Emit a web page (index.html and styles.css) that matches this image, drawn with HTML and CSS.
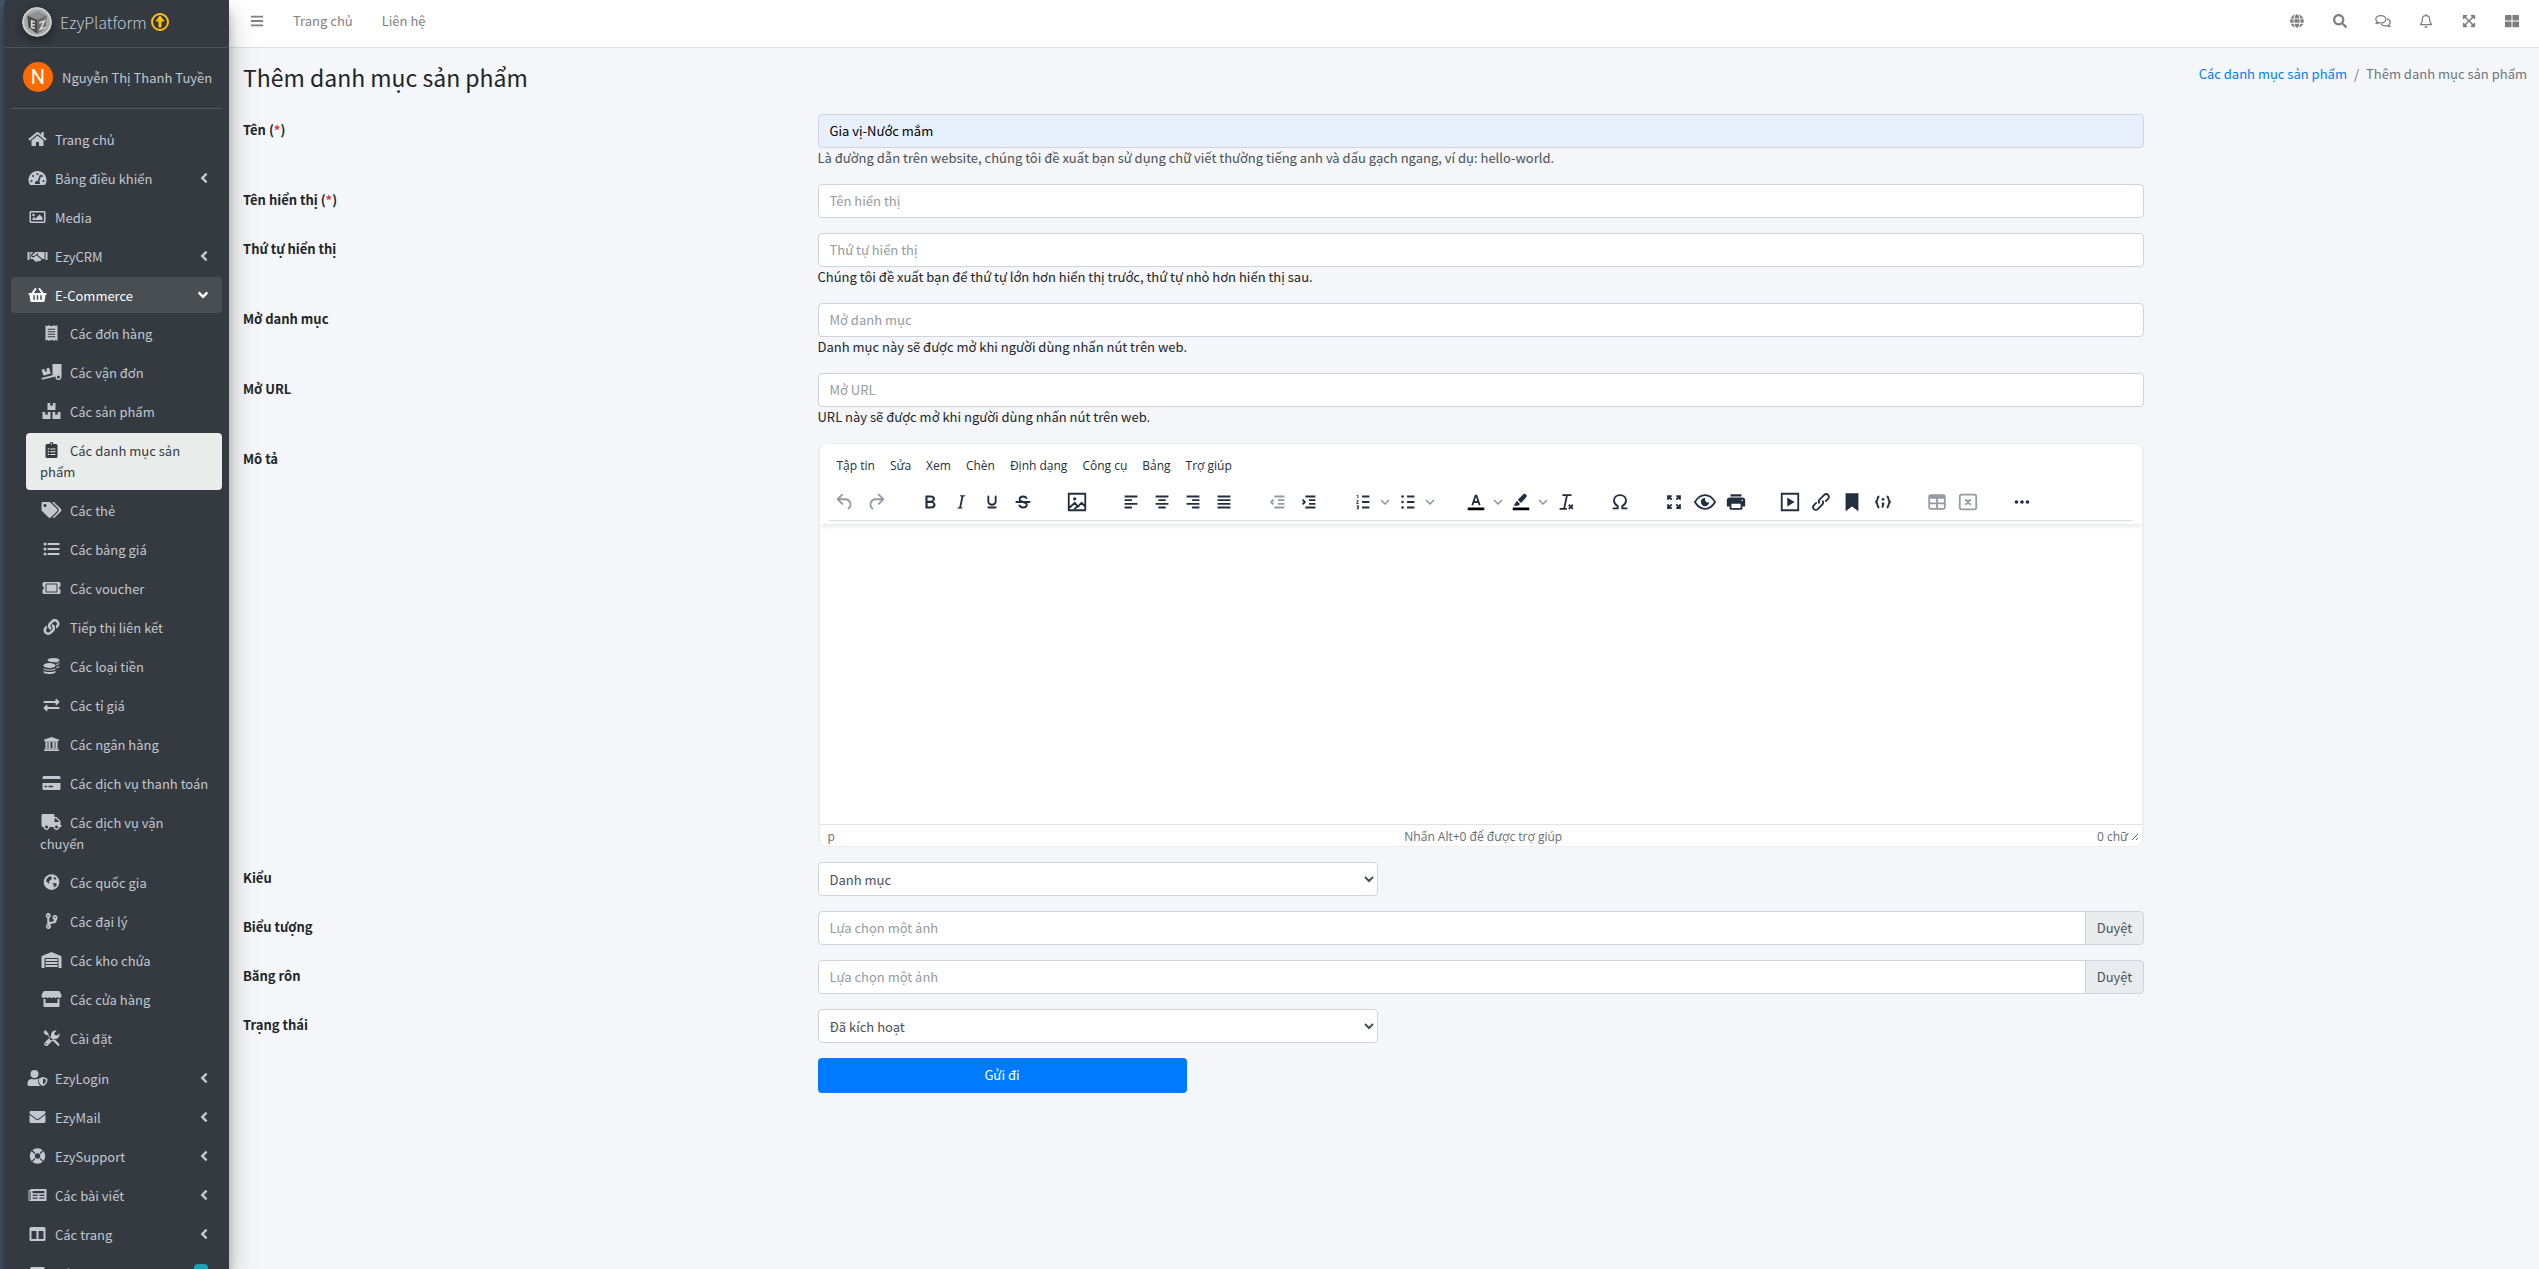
FILE: index.html
```html
<!DOCTYPE html>
<html lang="vi">
<head>
<meta charset="utf-8">
<meta name="viewport" content="width=device-width, initial-scale=1">
<title>Thêm danh mục sản phẩm</title>
<link rel="stylesheet" href="styles.css">
</head>
<body>
<svg class="sprite" aria-hidden="true">
  <symbol id="home" viewBox="0 0 576 512"><path d="M280.37 148.26L96 300.11V464a16 16 0 0 0 16 16l112.06-.29a16 16 0 0 0 15.92-16V368a16 16 0 0 1 16-16h64a16 16 0 0 1 16 16v95.64a16 16 0 0 0 16 16.05L464 480a16 16 0 0 0 16-16V300L295.67 148.26a12.19 12.19 0 0 0-15.3 0zM571.6 251.47L488 182.56V44.05a12 12 0 0 0-12-12h-56a12 12 0 0 0-12 12v72.61L318.47 43a48 48 0 0 0-61 0L4.34 251.47a12 12 0 0 0-1.6 16.9l25.5 31A12 12 0 0 0 45.15 301l235.22-193.74a12.19 12.19 0 0 1 15.3 0L530.9 301a12 12 0 0 0 16.9-1.6l25.5-31a12 12 0 0 0-1.7-16.93z"/></symbol>
  <symbol id="gauge" viewBox="0 0 576 512"><path fill-rule="evenodd" d="M288 32C129 32 0 161 0 320c0 53 14 102 39 145 6 9 16 15 27 15h444c11 0 21-6 27-15 25-43 39-92 39-145C576 161 447 32 288 32zM288 96a32 32 0 1 1 0 64 32 32 0 0 1 0-64zM96 384a32 32 0 1 1 0-64 32 32 0 0 1 0 64zM144 224a32 32 0 1 1 0-64 32 32 0 0 1 0 64zM390 153c13 4 20 18 15 30l-61 184c24 18 32 52 18 81H214c-25-48 8-96 58-96l24-4 61-180c4-13 20-20 33-15zM432 224a32 32 0 0 1-14-60c20-8 46 6 46 28 0 18-14 32-32 32zM480 384a32 32 0 1 1 0-64 32 32 0 0 1 0 64z"/></symbol>
  <symbol id="image" viewBox="0 0 512 512"><path d="M464 64H48C21.490 64 0 85.490 0 112v288c0 26.510 21.490 48 48 48h416c26.510 0 48-21.490 48-48V112c0-26.510-21.490-48-48-48zm-6 336H54a6 6 0 0 1-6-6V118a6 6 0 0 1 6-6h404a6 6 0 0 1 6 6v276a6 6 0 0 1-6 6zM128 152c-22.091 0-40 17.909-40 40s17.909 40 40 40 40-17.909 40-40-17.909-40-40-40zM96 352h320v-80l-87.515-87.515c-4.686-4.686-12.284-4.686-16.971 0L192 304l-39.515-39.515c-4.686-4.686-12.284-4.686-16.971 0L96 304v48z"/></symbol>
  <symbol id="handshake" viewBox="0 0 640 512"><path d="M0 128h64v256H0zM576 128h64v256h-64zM96 128h88l-54 60c-28 32-18 78 12 98 28 18 62 14 88-10l50-44 148 120c14 12 16 32 4 46-10 12-28 14-40 6-12 22-38 28-58 14-18 26-52 32-78 10l-92-80H96zM544 128v224h-68c-4-10-10-20-20-28L318 212l26-24c14-14 0-36-18-24l-116 88c-16 12-38 10-48-4-10-12-8-30 4-42l74-66c10-8 22-12 36-12h160c10 0 22 4 30 10z"/></symbol>
  <symbol id="basket" viewBox="0 0 576 512"><path d="M576 216v16c0 13.255-10.745 24-24 24h-8l-26.113 182.788C514.509 462.435 494.257 480 470.37 480H105.63c-23.887 0-44.139-17.565-47.518-41.212L32 256h-8c-13.255 0-24-10.745-24-24v-16c0-13.255 10.745-24 24-24h67.341l106.78-146.821c10.395-14.292 30.407-17.453 44.701-7.058 14.293 10.395 17.453 30.408 7.058 44.701L170.477 192h235.046L326.12 82.821c-10.395-14.292-7.234-34.306 7.059-44.701 14.291-10.395 34.306-7.235 44.701 7.058L484.659 192H552c13.255 0 24 10.745 24 24zM312 392V280c0-13.255-10.745-24-24-24s-24 10.745-24 24v112c0 13.255 10.745 24 24 24s24-10.745 24-24zm112 0V280c0-13.255-10.745-24-24-24s-24 10.745-24 24v112c0 13.255 10.745 24 24 24s24-10.745 24-24zm-224 0V280c0-13.255-10.745-24-24-24s-24 10.745-24 24v112c0 13.255 10.745 24 24 24s24-10.745 24-24z"/></symbol>
  <symbol id="receipt" viewBox="0 0 384 512"><path fill-rule="evenodd" d="M0 0l56 40 52-40 56 40 28-20 28 20 56-40 52 40 56-40v512l-56-40-52 40-56-40-28 20-28-20-56 40-52-40-56 40zM72 120v32h240v-32zM72 200v32h240v-32zM72 280v32h240v-32zM72 360v32h240v-32z"/></symbol>
  <symbol id="loading" viewBox="0 0 640 512"><path fill-rule="evenodd" d="M352 0h288v416a96 96 0 1 1-190-18L14 502 2 448l350-88zM544 368a48 48 0 1 0 0 96 48 48 0 0 0 0-96zM6 180l88-24 24 90 60-16-24-90 90-24 52 190-220 58c-8 2-16-2-18-10L0 192z"/></symbol>
  <symbol id="boxes" viewBox="0 0 576 512"><path d="M160 0h86v96l42-26 42 26V0h86v224H160zM0 288h86v96l42-26 42 26v-96h86v224H0zM320 288h86v96l42-26 42 26v-96h86v224H320z"/></symbol>
  <symbol id="clipboard" viewBox="0 0 384 512"><path fill-rule="evenodd" d="M336 64h-80a64 64 0 0 0-128 0H48a48 48 0 0 0-48 48v352a48 48 0 0 0 48 48h288a48 48 0 0 0 48-48V112a48 48 0 0 0-48-48zM192 40a24 24 0 1 1 0 48 24 24 0 0 1 0-48zM72 200h48v40H72zM152 204h168v32H152zM72 288h48v40H72zM152 292h168v32H152zM72 376h48v40H72zM152 380h168v32H152z"/></symbol>
  <symbol id="tags" viewBox="0 0 640 512"><path d="M497.941 225.941L286.059 14.059A48 48 0 0 0 252.118 0H48C21.490 0 0 21.490 0 48v204.118a48 48 0 0 0 14.059 33.941l211.882 211.882c18.744 18.745 49.136 18.746 67.882 0l204.118-204.118c18.745-18.745 18.745-49.137 0-67.882zM112 160c-26.510 0-48-21.490-48-48s21.490-48 48-48 48 21.490 48 48-21.490 48-48 48zm513.941 133.823L421.823 497.941c-18.745 18.745-49.137 18.745-67.882 0l-.36-.36L527.640 323.522c16.999-16.999 26.362-39.600 26.362-63.640s-9.362-46.641-26.362-63.640L331.397 0h48.721a48 48 0 0 1 33.941 14.059l211.882 211.882c18.745 18.745 18.745 49.137 0 67.882z"/></symbol>
  <symbol id="list" viewBox="0 0 512 512"><circle cx="48" cy="96" r="48"/><circle cx="48" cy="256" r="48"/><circle cx="48" cy="416" r="48"/><path d="M144 64h352a16 16 0 0 1 16 16v32a16 16 0 0 1-16 16H144a16 16 0 0 1-16-16V80a16 16 0 0 1 16-16zM144 224h352a16 16 0 0 1 16 16v32a16 16 0 0 1-16 16H144a16 16 0 0 1-16-16v-32a16 16 0 0 1 16-16zM144 384h352a16 16 0 0 1 16 16v32a16 16 0 0 1-16 16H144a16 16 0 0 1-16-16v-32a16 16 0 0 1 16-16z"/></symbol>
  <symbol id="ticket" viewBox="0 0 576 512"><path fill-rule="evenodd" d="M48 64h480a48 48 0 0 1 48 48v96a48 48 0 0 0 0 96v96a48 48 0 0 1-48 48H48a48 48 0 0 1-48-48v-96a48 48 0 0 0 0-96v-96a48 48 0 0 1 48-48zM96 136v240a24 24 0 0 0 24 24h336a24 24 0 0 0 24-24V136a24 24 0 0 0-24-24H120a24 24 0 0 0-24 24zM128 144h320v224H128z"/></symbol>
  <symbol id="link" viewBox="0 0 512 512"><path d="M326.612 185.391c59.747 59.809 58.927 155.698.36 214.590-.11.12-.24.25-.36.37l-67.200 67.200c-59.270 59.270-155.699 59.262-214.960 0-59.270-59.260-59.270-155.700 0-214.960l37.106-37.106c9.840-9.840 26.786-3.300 27.294 10.606.648 17.722 3.826 35.527 9.690 52.721 1.986 5.822.567 12.262-3.783 16.612l-13.087 13.087c-28.026 28.026-28.905 73.660-1.155 101.960 28.024 28.579 74.086 28.749 102.325.51l67.200-67.190c28.191-28.191 28.073-73.757 0-101.830-3.701-3.694-7.429-6.564-10.341-8.569a16.037 16.037 0 0 1-6.947-12.606c-.396-10.567 3.348-21.456 11.698-29.806l21.054-21.055c5.521-5.521 14.182-6.199 20.584-1.731a152.482 152.482 0 0 1 20.522 17.197zM467.547 44.449c-59.261-59.262-155.690-59.270-214.960 0l-67.200 67.200c-.12.12-.25.25-.36.37-58.566 58.892-59.387 154.781.36 214.590a152.454 152.454 0 0 0 20.521 17.196c6.402 4.468 15.064 3.789 20.584-1.731l21.054-21.055c8.350-8.350 12.094-19.239 11.698-29.806a16.037 16.037 0 0 0-6.947-12.606c-2.912-2.005-6.640-4.875-10.341-8.569-28.073-28.073-28.191-73.639 0-101.830l67.200-67.190c28.239-28.239 74.300-28.069 102.325.51 27.750 28.300 26.872 73.934-1.155 101.960l-13.087 13.087c-4.350 4.350-5.769 10.790-3.783 16.612 5.864 17.194 9.042 34.999 9.690 52.721.509 13.906 17.454 20.446 27.294 10.606l37.106-37.106c59.271-59.259 59.271-155.699.001-214.959z"/></symbol>
  <symbol id="coins" viewBox="0 0 512 512"><ellipse cx="320" cy="64" rx="192" ry="64"/><ellipse cx="192" cy="240" rx="192" ry="80"/><path d="M0 320c40 32 110 48 192 48s152-16 192-48v20c0 36-86 62-192 62S0 376 0 340zM0 404c40 32 110 44 192 44s152-12 192-44v44c0 36-86 64-192 64S0 484 0 448zM512 104c-22 24-66 40-110 46-16-10-34-16-54-20 68-2 130-16 164-44zM416 236v-48c40-8 76-20 96-38v10c0 30-42 60-96 76zM416 330v-48c40-8 76-20 96-38v16c0 28-40 56-96 70z"/></symbol>
  <symbol id="exchange" viewBox="0 0 512 512"><path d="M0 168v-16a24 24 0 0 1 24-24h360V80c0-21 26-32 41-17l80 80a24 24 0 0 1 0 34l-80 80c-15 15-41 4-41-17v-48H24a24 24 0 0 1-24-24zM488 320H128v-47c0-22-26-32-41-17l-80 80a24 24 0 0 0 0 34l80 80c15 15 41 4 41-17v-49h360a24 24 0 0 0 24-24v-16a24 24 0 0 0-24-24z"/></symbol>
  <symbol id="bank" viewBox="0 0 512 512"><path d="M256 32L16 122v38h32v24h416v-24h32v-38zM64 192h64v192H64zM160 192h64v192h-64zM288 192h64v192h-64zM384 192h64v192h-64zM32 424c0-22 14-32 32-32h384c18 0 32 10 32 32zM16 480v-30c0-12 10-18 24-18h432c14 0 24 6 24 18v30z"/></symbol>
  <symbol id="card" viewBox="0 0 576 512"><path fill-rule="evenodd" d="M0 432a48 48 0 0 0 48 48h480a48 48 0 0 0 48-48V256H0zM192 340h136a12 12 0 0 1 12 12v28a12 12 0 0 1-12 12H192zM76 340h72v52H76a12 12 0 0 1-12-12v-28a12 12 0 0 1 12-12zM576 80v48H0V80a48 48 0 0 1 48-48h480a48 48 0 0 1 48 48z"/></symbol>
  <symbol id="truck" viewBox="0 0 640 512"><path d="M624 352h-16V243.900c0-12.700-5.100-24.900-14.100-33.900L494 110.100c-9-9-21.200-14.100-33.900-14.100H416V48c0-26.500-21.500-48-48-48H48C21.500 0 0 21.500 0 48v320c0 26.500 21.500 48 48 48h16c0 53 43 96 96 96s96-43 96-96h128c0 53 43 96 96 96s96-43 96-96h48c8.800 0 16-7.200 16-16v-32c0-8.800-7.200-16-16-16zM160 464c-26.500 0-48-21.500-48-48s21.500-48 48-48 48 21.500 48 48-21.500 48-48 48zm320 0c-26.500 0-48-21.500-48-48s21.500-48 48-48 48 21.500 48 48-21.500 48-48 48zm80-208H416V144h44.100l99.900 99.900V256z"/></symbol>
  <symbol id="earth" viewBox="0 0 512 512"><path fill-rule="evenodd" d="M256 4a252 252 0 1 0 0 504 252 252 0 0 0 0-504zM80 236c10-74 60-140 136-164l44 10-14 34 26 22-22 40-44 10-8 40-36 2 22 34 0 38-34-8-24-38zM302 296l60-12 62 28-6 50-74 66-20-54 12-36-46-12zM336 84c40 18 66 46 82 82l-46 14-44-34z"/></symbol>
  <symbol id="branch" viewBox="0 0 384 512"><path fill-rule="evenodd" d="M384 144a80 80 0 1 0-113 73c-1 18-4 31-10 39-14 17-52 21-88 24-17 2-35 4-52 7V154a80 80 0 1 0-64 0v204a80 80 0 1 0 84 8c10-16 40-20 68-22 46-4 98-9 126-46 14-18 20-42 21-76a80 80 0 0 0 28-78zM80 56a24 24 0 1 1 0 48 24 24 0 0 1 0-48zM80 456a24 24 0 1 1 0-48 24 24 0 0 1 0 48zM304 120a24 24 0 1 1 0 48 24 24 0 0 1 0-48z"/></symbol>
  <symbol id="warehouse" viewBox="0 0 640 512"><path d="M610 117L338 4a48 48 0 0 0-37 0L30 117A48 48 0 0 0 0 161v343a8 8 0 0 0 8 8h80a8 8 0 0 0 8-8V224c0-18 14-32 33-32h382c19 0 33 14 33 32v280a8 8 0 0 0 8 8h80a8 8 0 0 0 8-8V161a48 48 0 0 0-30-44zM128 224h384v60H128zM128 320h384v62H128zM128 418h384v62H128z"/></symbol>
  <symbol id="store" viewBox="0 0 640 512"><path d="M92 0h456c18 0 32 8 40 22l46 96c24 52-10 106-64 106-26 0-48-12-62-30-16 18-38 30-64 30s-50-12-62-30c-14 18-36 30-62 30s-48-12-62-30c-14 18-36 30-62 30s-48-12-62-30c-14 18-36 30-62 30C16 224-18 170 6 118L52 22C60 8 74 0 92 0zM64 252h64v132h384V252h64v228a32 32 0 0 1-32 32H96a32 32 0 0 1-32-32z"/></symbol>
  <symbol id="tools" viewBox="0 0 512 512"><path fill-rule="evenodd" d="M64 0L0 64l64 98h54l90 90-26 28 56 56 28-26 104 104 18 18 80 80c10 10 36-8 40-34 4-16-2-30-10-40L372 312l-90-16-120-120v-54zM508 108c12 50 0 104-40 142-34 36-84 48-130 38L136 492a68 68 0 0 1-116-48c0-18 8-36 20-48l204-204c-12-46 2-96 38-134 38-38 92-52 142-40l-76 76 12 66 66 12zM80 412a24 24 0 1 0 0 48 24 24 0 0 0 0-48z"/></symbol>
  <symbol id="user-shield" viewBox="0 0 640 512"><path d="M224 256a128 128 0 1 0 0-256 128 128 0 0 0 0 256zM334 284c-8 104 26 176 88 228H48a48 48 0 0 1-48-48v-42c0-74 60-134 134-134h17c46 20 100 20 146 0h17z"/><path fill-rule="evenodd" d="M622 271l-116-45a32 32 0 0 0-22 0l-116 45c-10 4-16 14-16 24 0 118 72 190 132 215 8 3 16 3 22 0 48-19 134-84 134-215 0-10-8-20-18-24zM496 462V273l96 37c-6 84-54 132-96 152z"/></symbol>
  <symbol id="envelope" viewBox="0 0 512 512"><path d="M502.300 190.800c3.900-3.100 9.700-.2 9.700 4.700V400c0 26.500-21.500 48-48 48H48c-26.500 0-48-21.500-48-48V195.600c0-5 5.700-7.800 9.700-4.700 22.400 17.400 52.100 39.500 154.100 113.600 21.100 15.400 56.700 47.800 92.200 47.600 35.700.3 72-32.800 92.300-47.600 102-74.100 131.600-96.300 154-113.700zM256 320c23.200.4 56.600-29.200 73.400-41.400 132.700-96.300 142.800-104.700 173.400-128.700 5.800-4.500 9.200-11.500 9.200-18.900v-19c0-26.500-21.500-48-48-48H48c-26.500 0-48 21.500-48 48v19c0 7.400 3.400 14.300 9.200 18.900 30.600 23.900 40.700 32.400 173.400 128.700 16.800 12.200 50.200 41.800 73.400 41.400z"/></symbol>
  <symbol id="ring" viewBox="0 0 512 512"><circle cx="256" cy="256" r="168" fill="none" stroke="currentColor" stroke-width="160"/><path class="cut" d="M100 70L70 100l88 88 30-30zM412 70l30 30-88 88-30-30zM70 412l30 30 88-88-30-30zM442 412l-30 30-88-88 30-30z"/></symbol>
  <symbol id="news" viewBox="0 0 576 512"><path fill-rule="evenodd" d="M552 64H88a24 24 0 0 0-24 24v8H24a24 24 0 0 0-24 24v280a48 48 0 0 0 48 48h504a24 24 0 0 0 24-24V88a24 24 0 0 0-24-24zM32 128h32v272a16 16 0 0 1-32 0zM130 128h380v72H130zM130 248h160v42H130zM350 248h160v42H350zM130 336h160v42H130zM350 336h160v42H350z"/></symbol>
  <symbol id="columns" viewBox="0 0 512 512"><path fill-rule="evenodd" d="M464 32H48A48 48 0 0 0 0 80v352a48 48 0 0 0 48 48h416a48 48 0 0 0 48-48V80a48 48 0 0 0-48-48zM224 416H64V160h160zM448 416H288V160h160z"/></symbol>
  <symbol id="bars" viewBox="0 0 448 512"><path d="M16 132h416a16 16 0 0 0 16-16V76a16 16 0 0 0-16-16H16A16 16 0 0 0 0 76v40a16 16 0 0 0 16 16zM16 292h416a16 16 0 0 0 16-16v-40a16 16 0 0 0-16-16H16a16 16 0 0 0-16 16v40a16 16 0 0 0 16 16zM16 452h416a16 16 0 0 0 16-16v-40a16 16 0 0 0-16-16H16a16 16 0 0 0-16 16v40a16 16 0 0 0 16 16z"/></symbol>
  <symbol id="angle" viewBox="0 0 256 512"><path d="M31.700 239l136-136c9.400-9.400 24.600-9.400 33.900 0l22.600 22.600c9.400 9.400 9.400 24.600 0 33.900L127.900 256l96.400 96.400c9.400 9.400 9.400 24.600 0 33.900L201.700 409c-9.400 9.400-24.600 9.400-33.900 0l-136-136c-9.500-9.400-9.500-24.600-.1-34z"/></symbol>
  <symbol id="globe" viewBox="0 0 496 512"><path d="M336.500 160C322 70.700 287.800 8 248 8s-74 62.700-88.500 152h177zM152 256c0 22.200 1.200 43.500 3.300 64h185.300c2.100-20.500 3.300-41.800 3.300-64s-1.200-43.500-3.300-64H155.300c-2.100 20.500-3.300 41.800-3.300 64zm324.700-96c-28.600-67.900-86.500-120.400-158-141.600 24.400 33.800 41.200 84.700 50 141.600h108zM177.200 18.400C105.800 39.600 47.800 92.100 19.300 160h108c8.700-56.900 25.500-107.800 49.900-141.600zM487.400 192H372.700c2.100 21 3.300 42.500 3.300 64s-1.200 43-3.300 64h114.600c5.500-20.500 8.600-41.800 8.600-64s-3.100-43.500-8.500-64zM120 256c0-21.500 1.200-43 3.300-64H8.600C3.200 212.500 0 233.800 0 256s3.200 43.500 8.600 64h114.600c-2-21-3.200-42.500-3.200-64zm39.500 96c14.500 89.300 48.700 152 88.500 152s74-62.700 88.500-152h-177zm159.300 141.600c71.400-21.200 129.400-73.700 158-141.600h-108c-8.800 56.900-25.600 107.800-50 141.600zM19.300 352c28.600 67.900 86.500 120.400 158 141.600-24.400-33.800-41.200-84.700-50-141.600h-108z"/></symbol>
  <symbol id="search" viewBox="0 0 512 512"><path d="M505 442.700L405.300 343c-4.500-4.500-10.600-7-17-7H372c27.600-35.300 44-79.700 44-128C416 93.100 322.900 0 208 0S0 93.100 0 208s93.100 208 208 208c48.300 0 92.700-16.400 128-44v16.300c0 6.400 2.500 12.500 7 17l99.700 99.700c9.400 9.400 24.600 9.400 33.900 0l28.300-28.300c9.400-9.400 9.400-24.600.1-34zM208 336c-70.700 0-128-57.200-128-128 0-70.700 57.200-128 128-128 70.700 0 128 57.200 128 128 0 70.700-57.200 128-128 128z"/></symbol>
  <symbol id="comments" viewBox="0 0 576 512"><path fill="none" stroke="currentColor" stroke-width="46" stroke-linejoin="round" d="M208 56c102 0 184 60 184 136s-82 136-184 136c-28 0-54-4-78-13-28 20-62 32-100 35 22-20 36-44 42-72-30-24-48-54-48-86 0-76 82-136 184-136zM432 176c70 20 120 68 120 124 0 32-18 62-48 86 6 28 20 52 42 72-38-3-72-15-100-35-24 9-50 13-78 13-64 0-122-26-154-66"/></symbol>
  <symbol id="bell" viewBox="0 0 448 512"><path fill="none" stroke="currentColor" stroke-width="46" stroke-linejoin="round" d="M224 58c-76 0-134 58-134 140 0 118-36 140-62 174v20h392v-20c-26-34-62-56-62-174 0-82-58-140-134-140z"/><path d="M200 0h48v60h-48zM160 448h128a64 64 0 0 1-128 0z"/></symbol>
  <symbol id="expand" viewBox="0 0 448 512"><path d="M0 56a24 24 0 0 1 24-24h112c22 0 32 26 17 41l-36 36 107 107 107-107-36-36c-15-15-5-41 17-41h112a24 24 0 0 1 24 24v112c0 22-26 32-41 17l-36-36-107 107 107 107 36-36c15-15 41-5 41 17v112a24 24 0 0 1-24 24H312c-22 0-32-26-17-41l36-36-107-107-107 107 36 36c15 15 5 41-17 41H24a24 24 0 0 1-24-24V344c0-22 26-32 41-17l36 36 107-107L77 149l-36 36c-15 15-41 5-41-17z"/></symbol>
  <symbol id="grid" viewBox="0 0 512 512"><rect y="32" width="240" height="208" rx="24"/><rect x="272" y="32" width="240" height="208" rx="24"/><rect y="272" width="240" height="208" rx="24"/><rect x="272" y="272" width="240" height="208" rx="24"/></symbol>
  <symbol id="upgrade" viewBox="0 0 20 20"><circle cx="10" cy="10" r="8" fill="none" stroke="currentColor" stroke-width="2"/><path d="M10 4l4 5h-3v6H9V9H6z" stroke="currentColor"/></symbol>

  <symbol id="t-undo" viewBox="0 0 24 24"><path d="M6.400 8H12c3.700 0 6.200 2 6.800 5.100.6 2.700-.4 5.600-2.300 6.800a1 1 0 0 1-1-1.800c1.100-.6 1.800-2.700 1.400-4.600-.5-2.100-2.100-3.500-4.900-3.500H6.400l3.300 3.300a1 1 0 1 1-1.400 1.400l-5-5a1 1 0 0 1 0-1.400l5-5a1 1 0 0 1 1.400 1.400L6.400 8Z"/></symbol>
  <symbol id="t-redo" viewBox="0 0 24 24"><path d="M17.600 10H12c-2.800 0-4.400 1.400-4.900 3.500-.4 2 .3 4 1.400 4.600a1 1 0 1 1-1 1.800c-2-1.200-2.900-4.100-2.300-6.800.6-3 3-5.100 6.800-5.100h5.600l-3.300-3.300a1 1 0 1 1 1.400-1.400l5 5a1 1 0 0 1 0 1.400l-5 5a1 1 0 0 1-1.400-1.400l3.300-3.300Z"/></symbol>
  <symbol id="t-bold" viewBox="0 0 24 24"><path d="M7.800 19c-.3 0-.5 0-.6-.2l-.2-.5V5.700c0-.2 0-.4.200-.5l.6-.2h5c1.500 0 2.700.3 3.500 1 .7.6 1.100 1.400 1.100 2.500a3 3 0 0 1-.6 1.900c-.4.600-1 1-1.600 1.200.4.100.9.300 1.300.6s.8.700 1 1.200c.4.400.5 1 .5 1.600 0 1.300-.4 2.300-1.300 3-.8.700-2.100 1-3.800 1H7.800Zm5-8.300c.6 0 1.200-.1 1.600-.5.4-.3.600-.7.600-1.300 0-1.100-.8-1.700-2.300-1.700H9.300v3.500h3.400Zm.5 6c.7 0 1.300-.1 1.700-.4.400-.4.600-.9.600-1.500s-.2-1-.7-1.400c-.4-.3-1-.4-2-.4H9.400v3.800h4Z"/></symbol>
  <symbol id="t-italic" viewBox="0 0 24 24"><path d="m16.700 4.700-.1.900h-.3c-.6 0-1 0-1.400.3-.3.300-.4.600-.5 1.100l-2.100 9.800v.6c0 .5.400.8 1.400.8h.2l-.2.800H8l.2-.8h.2c1.100 0 1.800-.5 2-1.500l2-9.800.1-.5c0-.6-.4-.8-1.400-.8h-.3l.2-.9h5.800Z"/></symbol>
  <symbol id="t-underline" viewBox="0 0 24 24"><path d="M16 5c.6 0 1 .4 1 1v5.500a4 4 0 0 1-.4 1.800l-1 1.400a5.300 5.300 0 0 1-5.500 1 5 5 0 0 1-1.600-1c-.5-.4-.8-.9-1.100-1.400a4 4 0 0 1-.4-1.800V6c0-.6.400-1 1-1s1 .4 1 1v5.500c0 .3 0 .6.200 1l.6.700a3.300 3.300 0 0 0 2.200.8 3.400 3.400 0 0 0 2.200-.8c.3-.2.400-.5.6-.8l.2-.9V6c0-.6.400-1 1-1ZM8 17h8c.6 0 1 .4 1 1s-.4 1-1 1H8a1 1 0 0 1 0-2Z"/></symbol>
  <symbol id="t-strike" viewBox="0 0 24 24"><path class="ln" d="M4 12h16M16 8.500C15.600 6.800 14 6 12.200 6 10 6 8.300 7 8.300 9c0 3.800 7.900 2.200 7.900 6 0 2-1.800 3-4 3-2.400 0-4-1-4.400-3"/></symbol>
  <symbol id="t-image" viewBox="0 0 24 24"><path class="ln" d="M3 3h18v18H3zM4 18l5.500-5 3.500 4 4-4 4 4M9 20l4-4"/><circle cx="9.500" cy="8.500" r="1.800"/></symbol>
  <symbol id="t-left" viewBox="0 0 24 24"><path class="ln" d="M5 6h14M5 10h8M5 14h14M5 18h8"/></symbol>
  <symbol id="t-center" viewBox="0 0 24 24"><path class="ln" d="M5 6h14M8 10h8M5 14h14M8 18h8"/></symbol>
  <symbol id="t-right" viewBox="0 0 24 24"><path class="ln" d="M5 6h14M11 10h8M5 14h14M11 18h8"/></symbol>
  <symbol id="t-justify" viewBox="0 0 24 24"><path class="ln" d="M5 6h14M5 10h14M5 14h14M5 18h14"/></symbol>
  <symbol id="t-outdent" viewBox="0 0 24 24"><path class="ln" d="M8 6h11M12 10h7M12 14h7M8 18h11M7 9.500L4.500 12 7 14.500"/></symbol>
  <symbol id="t-indent" viewBox="0 0 24 24"><path class="ln" d="M8 6h11M12 10h7M12 14h7M8 18h11M5 9.500L7.500 12 5 14.500"/></symbol>
  <symbol id="t-ol" viewBox="0 0 24 24"><path class="ln" d="M11 6h8M11 12h8M11 18h8"/><path fill="none" stroke="currentColor" d="M5 5h1.500v3M5 10.500h2L5 13.500h2.500M5 16h2v1.700H5.500H7v1.800H5"/></symbol>
  <symbol id="t-ul" viewBox="0 0 24 24"><path class="ln" d="M11 6h8M11 12h8M11 18h8"/><circle cx="6" cy="6" r="1.400"/><circle cx="6" cy="12" r="1.400"/><circle cx="6" cy="18" r="1.400"/></symbol>
  <symbol id="t-caret" viewBox="0 0 10 10"><path class="ln thin" d="M1 3l4 4 4-4"/></symbol>
  <symbol id="t-color" viewBox="0 0 24 24"><path fill="#000" d="M3 18h18v3H3z"/><path class="ln" d="M8 15.500L11.500 5h1L16 15.500M9.500 12h5"/></symbol>
  <symbol id="t-marker" viewBox="0 0 24 24"><path fill="#000" d="M3 18h18v3H3z"/><path d="M7.500 10.500l3.500 3.700-2.200 1.800H4l1-1.500zM8.500 9.500l6-6c1-.8 2-.8 3 .2s1 2 .2 3l-5.700 6.300z"/></symbol>
  <symbol id="t-clear" viewBox="0 0 24 24"><path class="ln" d="M8 4.500h10M13 5l-3 14M5 19.500h8M15 15l4.500 4.500M19.500 15L15 19.500"/></symbol>
  <symbol id="t-omega" viewBox="0 0 24 24"><path class="ln" d="M4 19h5.500v-2.500C7 15 5.500 13 5.500 10.500 5.500 7 8 4.500 12 4.500s6.500 2.500 6.500 6c0 2.500-1.500 4.500-4 6V19H20"/></symbol>
  <symbol id="t-full" viewBox="0 0 24 24"><path class="ln" d="M5.500 9.500v-4h4M6 6l3.500 3.500M14.500 5.500h4v4M18 6l-3.500 3.500M5.500 14.500v4h4M6 18l3.500-3.500M18.500 14.500v4h-4M18 18l-3.500-3.500"/></symbol>
  <symbol id="t-eye" viewBox="0 0 24 24"><path class="ln" d="M1 12c3-5 7-7.500 11-7.500S20 7 23 12c-3 5-7 7.500-11 7.500S4 17 1 12z"/><path d="M12 7.500a4.500 4.500 0 1 0 4.500 4.500c-2 1.500-5-.5-4.500-4.500z"/></symbol>
  <symbol id="t-print" viewBox="0 0 24 24"><path fill-rule="evenodd" d="M6 3.500h12v2.500H6zM5 7h14a3 3 0 0 1 3 3v6a1 1 0 0 1-1 1h-2v2a1.500 1.500 0 0 1-1.500 1.500h-11A1.500 1.500 0 0 1 5 19v-2H3a1 1 0 0 1-1-1v-6a3 3 0 0 1 3-3zM7 14v4.500h10V14zM18 9.500v1.500h1.500V9.500z"/></symbol>
  <symbol id="t-media" viewBox="0 0 24 24"><path class="ln" d="M3 3h18v18H3z"/><path d="M9 7l8 5-8 5z"/></symbol>
  <symbol id="t-link" viewBox="0 0 24 24"><path class="ln" d="M10.500 13.500c-1.200-1.200-1.200-3 0-4.200l5-5c1.200-1.200 3-1.200 4.200 0s1.200 3 0 4.200l-3 3M13.500 10.500c1.200 1.200 1.200 3 0 4.200l-5 5c-1.200 1.200-3 1.200-4.200 0s-1.200-3 0-4.200l3-3"/></symbol>
  <symbol id="t-bookmark" viewBox="0 0 24 24"><path d="M5 2.500h14V22l-7-5-7 5z"/></symbol>
  <symbol id="t-code" viewBox="0 0 24 24"><path class="ln" d="M8 6C4.500 6 7.500 12 3.500 12 7.500 12 4.500 18 8 18M16 6c3.500 0 .5 6 4.500 6-4 0-1 6-4.500 6M12 13v3l-1 2"/><circle cx="12" cy="9" r="1.500"/><circle cx="12" cy="14" r="1.500"/></symbol>
  <symbol id="t-table" viewBox="0 0 24 24"><path fill-rule="evenodd" d="M5 3.500h14a2.500 2.500 0 0 1 2.500 2.500v12a2.500 2.500 0 0 1-2.500 2.500H5A2.500 2.500 0 0 1 2.500 18V6A2.500 2.500 0 0 1 5 3.500zM4.500 8.500v4H11v-4zM13 8.500v4h6.500v-4zM4.500 14.500v4H11v-4zM13 14.500v4h6.500v-4z"/></symbol>
  <symbol id="t-notable" viewBox="0 0 24 24"><path class="ln" d="M5 4h14a2 2 0 0 1 2 2v12a2 2 0 0 1-2 2H5a2 2 0 0 1-2-2V6a2 2 0 0 1 2-2zM9 9l6 6M15 9l-6 6"/></symbol>
  <symbol id="t-more" viewBox="0 0 24 24"><circle cx="6" cy="12" r="2"/><circle cx="12" cy="12" r="2"/><circle cx="18" cy="12" r="2"/></symbol>
</svg>

<div class="app">
  <aside class="sidebar">
    <a class="brand" href="#">
      <svg class="brand-logo" viewBox="0 0 28 28" aria-hidden="true"><circle cx="14" cy="14" r="13" fill="#a9a9a9" stroke="#c9cbcd" stroke-width="2"/><path d="M5 8l10-4 8 4-9 4z" fill="#909090"/><path d="M5 8l9 4v13l-8-6z" fill="#4a4a4a"/><path d="M14 12l9-4-1 12-8 5z" fill="#6c6c6c"/><path d="M12 14l-3-1v6l3 1M9 16l3 1M16 15l5-2-4 8 5-2" fill="none" stroke="#d5d5d5" stroke-width="1.500"/></svg>
      <span class="brand-text">EzyPlatform</span>
      <svg class="brand-up" aria-hidden="true"><use href="#upgrade"/></svg>
    </a>
    <div class="user">
      <span class="avatar">N</span>
      <a href="#">Nguyễn Thị Thanh Tuyền</a>
    </div>
    <nav class="menu">
      <a class="item" href="#"><svg><use href="#home"/></svg>Trang chủ</a>
      <a class="item" href="#"><svg><use href="#gauge"/></svg>Bảng điều khiển<svg class="angle"><use href="#angle"/></svg></a>
      <a class="item" href="#"><svg><use href="#image"/></svg>Media</a>
      <a class="item" href="#"><svg><use href="#handshake"/></svg>EzyCRM<svg class="angle"><use href="#angle"/></svg></a>
      <a class="item open" href="#"><svg><use href="#basket"/></svg>E-Commerce<svg class="angle"><use href="#angle"/></svg></a>
      <div class="submenu">
        <a class="sub" href="#"><svg><use href="#receipt"/></svg>Các đơn hàng</a>
        <a class="sub" href="#"><svg><use href="#loading"/></svg>Các vận đơn</a>
        <a class="sub" href="#"><svg><use href="#boxes"/></svg>Các sản phẩm</a>
        <a class="sub active" href="#"><svg><use href="#clipboard"/></svg>Các danh mục sản phẩm</a>
        <a class="sub" href="#"><svg><use href="#tags"/></svg>Các thẻ</a>
        <a class="sub" href="#"><svg><use href="#list"/></svg>Các bảng giá</a>
        <a class="sub" href="#"><svg><use href="#ticket"/></svg>Các voucher</a>
        <a class="sub" href="#"><svg><use href="#link"/></svg>Tiếp thị liên kết</a>
        <a class="sub" href="#"><svg><use href="#coins"/></svg>Các loại tiền</a>
        <a class="sub" href="#"><svg><use href="#exchange"/></svg>Các tỉ giá</a>
        <a class="sub" href="#"><svg><use href="#bank"/></svg>Các ngân hàng</a>
        <a class="sub" href="#"><svg><use href="#card"/></svg>Các dịch vụ thanh toán</a>
        <a class="sub" href="#"><svg><use href="#truck"/></svg>Các dịch vụ vận chuyển</a>
        <a class="sub" href="#"><svg><use href="#earth"/></svg>Các quốc gia</a>
        <a class="sub" href="#"><svg><use href="#branch"/></svg>Các đại lý</a>
        <a class="sub" href="#"><svg><use href="#warehouse"/></svg>Các kho chứa</a>
        <a class="sub" href="#"><svg><use href="#store"/></svg>Các cửa hàng</a>
        <a class="sub" href="#"><svg><use href="#tools"/></svg>Cài đặt</a>
      </div>
      <a class="item" href="#"><svg><use href="#user-shield"/></svg>EzyLogin<svg class="angle"><use href="#angle"/></svg></a>
      <a class="item" href="#"><svg><use href="#envelope"/></svg>EzyMail<svg class="angle"><use href="#angle"/></svg></a>
      <a class="item" href="#"><svg><use href="#ring"/></svg>EzySupport<svg class="angle"><use href="#angle"/></svg></a>
      <a class="item" href="#"><svg><use href="#news"/></svg>Các bài viết<svg class="angle"><use href="#angle"/></svg></a>
      <a class="item" href="#"><svg><use href="#columns"/></svg>Các trang<svg class="angle"><use href="#angle"/></svg></a>
      <a class="item" href="#"><svg><use href="#bars"/></svg>Các<span class="badge"></span></a>
    </nav>
  </aside>

  <div class="page">
    <header class="navbar">
      <button class="icon-btn" type="button" aria-label="Menu"><svg><use href="#bars"/></svg></button>
      <a href="#">Trang chủ</a>
      <a href="#">Liên hệ</a>
      <div class="navbar-tools">
        <button class="icon-btn" type="button" aria-label="Ngôn ngữ"><svg><use href="#globe"/></svg></button>
        <button class="icon-btn" type="button" aria-label="Tìm kiếm"><svg><use href="#search"/></svg></button>
        <button class="icon-btn" type="button" aria-label="Tin nhắn"><svg><use href="#comments"/></svg></button>
        <button class="icon-btn" type="button" aria-label="Thông báo"><svg><use href="#bell"/></svg></button>
        <button class="icon-btn" type="button" aria-label="Toàn màn hình"><svg><use href="#expand"/></svg></button>
        <button class="icon-btn" type="button" aria-label="Ứng dụng"><svg><use href="#grid"/></svg></button>
      </div>
    </header>

    <main class="content">
      <div class="page-head">
        <h1>Thêm danh mục sản phẩm</h1>
        <nav class="crumbs"><a href="#">Các danh mục sản phẩm</a><span class="slash">/</span><span>Thêm danh mục sản phẩm</span></nav>
      </div>

      <form class="form">
        <div class="row">
          <label for="name">Tên (<span class="req">*</span>)</label>
          <div class="wide"><input class="control filled" id="name" type="text" value="Gia vị-Nước mắm"><p class="help soft">Là đường dẫn trên website, chúng tôi đề xuất bạn sử dụng chữ viết thường tiếng anh và dấu gạch ngang, ví dụ: hello-world.</p></div>
        </div>
        <div class="row">
          <label for="display">Tên hiển thị (<span class="req">*</span>)</label>
          <div class="wide"><input class="control" id="display" type="text" placeholder="Tên hiển thị"></div>
        </div>
        <div class="row">
          <label for="order">Thứ tự hiển thị</label>
          <div class="wide"><input class="control" id="order" type="text" placeholder="Thứ tự hiển thị"><p class="help">Chúng tôi đề xuất bạn để thứ tự lớn hơn hiển thị trước, thứ tự nhỏ hơn hiển thị sau.</p></div>
        </div>
        <div class="row">
          <label for="open-cat">Mở danh mục</label>
          <div class="wide"><input class="control" id="open-cat" type="text" placeholder="Mở danh mục"><p class="help">Danh mục này sẽ được mở khi người dùng nhấn nút trên web.</p></div>
        </div>
        <div class="row">
          <label for="open-url">Mở URL</label>
          <div class="wide"><input class="control" id="open-url" type="text" placeholder="Mở URL"><p class="help">URL này sẽ được mở khi người dùng nhấn nút trên web.</p></div>
        </div>
        <div class="row">
          <label for="desc">Mô tả</label>
          <div class="wide editor">
            <div class="editor-head">
              <div class="editor-menu">
                <button type="button">Tập tin</button><button type="button">Sửa</button><button type="button">Xem</button><button type="button">Chèn</button><button type="button">Định dạng</button><button type="button">Công cụ</button><button type="button">Bảng</button><button type="button">Trợ giúp</button>
              </div>
              <div class="toolbar">
                <div class="group"><button type="button" disabled aria-label="Hoàn tác"><svg><use href="#t-undo"/></svg></button><button type="button" disabled aria-label="Làm lại"><svg><use href="#t-redo"/></svg></button></div>
                <div class="group"><button type="button" aria-label="In đậm"><svg><use href="#t-bold"/></svg></button><button type="button" aria-label="In nghiêng"><svg><use href="#t-italic"/></svg></button><button type="button" aria-label="Gạch dưới"><svg><use href="#t-underline"/></svg></button><button type="button" aria-label="Gạch ngang"><svg><use href="#t-strike"/></svg></button></div>
                <div class="group"><button type="button" aria-label="Chèn ảnh"><svg><use href="#t-image"/></svg></button></div>
                <div class="group"><button type="button" aria-label="Canh trái"><svg><use href="#t-left"/></svg></button><button type="button" aria-label="Canh giữa"><svg><use href="#t-center"/></svg></button><button type="button" aria-label="Canh phải"><svg><use href="#t-right"/></svg></button><button type="button" aria-label="Canh đều"><svg><use href="#t-justify"/></svg></button></div>
                <div class="group"><button type="button" disabled aria-label="Giảm thụt lề"><svg><use href="#t-outdent"/></svg></button><button type="button" aria-label="Tăng thụt lề"><svg><use href="#t-indent"/></svg></button></div>
                <div class="group"><button type="button" aria-label="Danh sách số"><svg><use href="#t-ol"/></svg></button><button class="caret" type="button" aria-label="Kiểu số"><svg><use href="#t-caret"/></svg></button><button type="button" aria-label="Danh sách"><svg><use href="#t-ul"/></svg></button><button class="caret" type="button" aria-label="Kiểu danh sách"><svg><use href="#t-caret"/></svg></button></div>
                <div class="group"><button type="button" aria-label="Màu chữ"><svg><use href="#t-color"/></svg></button><button class="caret" type="button" aria-label="Chọn màu chữ"><svg><use href="#t-caret"/></svg></button><button type="button" aria-label="Màu nền"><svg><use href="#t-marker"/></svg></button><button class="caret" type="button" aria-label="Chọn màu nền"><svg><use href="#t-caret"/></svg></button><button type="button" aria-label="Xóa định dạng"><svg><use href="#t-clear"/></svg></button></div>
                <div class="group"><button type="button" aria-label="Ký tự đặc biệt"><svg><use href="#t-omega"/></svg></button></div>
                <div class="group"><button type="button" aria-label="Toàn màn hình"><svg><use href="#t-full"/></svg></button><button type="button" aria-label="Xem trước"><svg><use href="#t-eye"/></svg></button><button type="button" aria-label="In"><svg><use href="#t-print"/></svg></button></div>
                <div class="group"><button type="button" aria-label="Chèn media"><svg><use href="#t-media"/></svg></button><button type="button" aria-label="Chèn liên kết"><svg><use href="#t-link"/></svg></button><button type="button" aria-label="Neo"><svg><use href="#t-bookmark"/></svg></button><button type="button" aria-label="Chèn mã"><svg><use href="#t-code"/></svg></button></div>
                <div class="group"><button type="button" disabled aria-label="Bảng"><svg><use href="#t-table"/></svg></button><button type="button" disabled aria-label="Xóa bảng"><svg><use href="#t-notable"/></svg></button></div>
                <div class="group"><button type="button" aria-label="Thêm"><svg><use href="#t-more"/></svg></button></div>
              </div>
            </div>
            <textarea id="desc"></textarea>
            <div class="status">
              <span class="path">p</span><span>Nhấn Alt+0 để được trợ giúp</span>
              <span class="count">0 chữ<svg viewBox="0 0 8 8" aria-hidden="true"><path d="M1 7l6-6M5 7l2-2" fill="none" stroke="currentColor"/></svg></span>
            </div>
          </div>
        </div>
        <div class="row">
          <label for="type">Kiểu</label>
          <select class="control mid" id="type"><option>Danh mục</option></select>
        </div>
        <div class="row">
          <label for="icon">Biểu tượng</label>
          <div class="wide picker"><input class="control" id="icon" type="text" placeholder="Lựa chọn một ảnh"><button type="button">Duyệt</button></div>
        </div>
        <div class="row">
          <label for="banner">Băng rôn</label>
          <div class="wide picker"><input class="control" id="banner" type="text" placeholder="Lựa chọn một ảnh"><button type="button">Duyệt</button></div>
        </div>
        <div class="row">
          <label for="state">Trạng thái</label>
          <select class="control mid" id="state"><option>Đã kích hoạt</option></select>
        </div>
        <div class="row">
          <button class="submit" type="submit">Gửi đi</button>
        </div>
      </form>
    </main>
  </div>
</div>
</body>
</html>
```
FILE: styles.css
```css
* { box-sizing: border-box; }

body {
  margin: 0;
  font: 13px/21px "Noto Sans CJK SC", "Noto Sans", sans-serif;
  color: #212529;
  background: #44546b;
}

a { color: inherit; text-decoration: none; }
button { font: inherit; color: inherit; border: 0; background: none; padding: 0; }
svg { fill: currentColor; }
.sprite { display: none; }
.ln { fill: none; stroke: currentColor; stroke-width: 2; }
.thin { stroke-width: 1.5; }
.cut { fill: #343a40; }

.app {
  display: flex;
  height: 100vh;
  padding-left: 4px;
  overflow: hidden;
}

/* Sidebar */
.sidebar {
  position: relative;
  z-index: 1;
  flex: 0 0 225px;
  overflow: hidden;
  border-radius: 4px 0 0 4px;
  background: #343a40;
  color: #c2c7d0;
  box-shadow: 0 14px 28px rgba(0, 0, 0, .25), 0 10px 10px rgba(0, 0, 0, .22);
}

.brand {
  display: flex;
  align-items: center;
  height: 48px;
  padding: 0 18px 3px;
  border-bottom: 1px solid #4b545c;
  font-size: 16px;
  font-weight: 300;
}
.brand-logo { width: 30px; height: 30px; margin-right: 8px; border-radius: 50%; box-shadow: 0 3px 8px rgba(0, 0, 0, .4); }
.brand-up { width: 20px; height: 20px; margin-left: 3px; color: #ffc107; }

.user {
  display: flex;
  align-items: center;
  gap: 9px;
  height: 61px;
  margin: 0 7px;
  padding: 0 0 2px 12px;
  border-bottom: 1px solid #4f5962;
  white-space: nowrap;
}
.avatar {
  width: 30px;
  height: 30px;
  border-radius: 50%;
  background: #ff6a00;
  color: #fff;
  font: 20px/30px Roboto, sans-serif;
  text-align: center;
}

.menu { padding: 12px 7px 0; }
.item, .sub { border-radius: 4px; margin-bottom: 3px; }
.item { display: flex; align-items: center; height: 36px; padding: 0 14px 0 15px; }
.item svg { width: 23px; height: 16px; margin-right: 6px; }
.item .angle { width: 8px; height: 16px; margin: 0 0 0 auto; }
.item.open { background: #494e53; color: #fff; }
.item.open .angle { transform: rotate(-90deg); margin-right: 1px; }
.submenu { margin-left: 15px; }
.sub { display: block; padding: 7px 13px 8px 14px; }
.sub svg { width: 23px; height: 16px; margin-right: 7px; vertical-align: -2px; }
.sub.active { background: #e9ecea; color: #343a40; }
.badge { width: 14px; height: 18px; margin-left: auto; border-radius: 4px; background: #17a2b8; }

/* Top bar */
.page { flex: 1; min-width: 0; background: #f4f6f9; overflow: auto; }
.navbar {
  display: flex;
  align-items: center;
  gap: 29px;
  height: 48px;
  padding: 0 20px 6px 21px;
  border-bottom: 1px solid #dee2e6;
  background: #fff;
  color: #7f7f7f;
}
.icon-btn { display: flex; align-items: center; justify-content: center; width: 14px; height: 21px; }
.icon-btn svg { width: 16px; height: 14px; flex: none; }
.navbar-tools { display: flex; gap: 29px; margin-left: auto; }

/* Page heading */
.content { padding: 14px 12px 14px 14px; }
.page-head { display: flex; justify-content: space-between; margin-bottom: 21px; }
h1 { margin: 0; font-size: 23px; line-height: 31px; font-weight: 400; }
.crumbs { display: flex; gap: 7px; line-height: 24px; color: #6c757d; }
.crumbs a { color: #007bff; }

/* Form */
.row { display: grid; grid-template-columns: repeat(12, 1fr); column-gap: 14px; margin-bottom: 15px; }
label { grid-column: 1 / span 3; padding-top: 5px; font-weight: 700; }
.req { color: #dc3545; }
.wide { grid-column: 4 / span 7; }
.mid { grid-column: 4 / span 3; }
.control {
  display: block;
  width: 100%;
  height: 34px;
  padding: 0 11px 2px;
  border: 1px solid #ced4da;
  border-radius: 4px;
  background: #fff;
  color: #495057;
  font: inherit;
}
.control::placeholder { color: #939ba2; }
.control.filled { background: #e8f0fe; color: #000; }
select.control { padding: 0 7px; }
.help { margin: 0; padding-bottom: 2px; line-height: 19px; }
.soft { color: #495057; }

.picker { display: flex; }
.picker .control { border-radius: 4px 0 0 4px; }
.picker button {
  flex: none;
  width: 59px;
  margin-left: -1px;
  padding-bottom: 2px;
  border: 1px solid #ced4da;
  border-radius: 0 4px 4px 0;
  background: #e9ecef;
  color: #495057;
}
.submit { grid-column: 4 / span 2; height: 35px; padding-bottom: 2px; border-radius: 4px; background: #007bff; color: #fff; }

/* Rich text editor */
.editor { height: 404px; display: flex; flex-direction: column; border: 2px solid #eee; border-width: 1px 2px; border-radius: 9px; background: #fff; overflow: hidden; }
.editor-head { position: relative; padding: 8px 9px 3px; box-shadow: 0 2px 5px rgba(34, 47, 62, .12); }
.editor-menu { display: flex; gap: 15px; padding: 0 8px 5px; height: 33px; align-items: center; color: #222f3e; font: 12px/16px "Open Sans", sans-serif; }
.toolbar { display: flex; gap: 24px; height: 36px; padding: 0 1px 1px; border-bottom: 1px solid #e0e0e0; color: #222f3e; }
.group { display: flex; gap: 1px; }
.group button { display: flex; align-items: center; justify-content: center; width: 30px; }
.group button:disabled { color: #959ba2; }
.group svg { width: 22px; height: 22px; }
.group .caret { width: 13px; color: #8b929a; }
.group .caret svg { width: 10px; height: 10px; }
textarea { flex: 1; border: 0; padding: 14px; resize: none; background: none; font: inherit; outline: 0; }
.status { display: flex; height: 22px; padding: 2px 3px 0 8px; border-top: 1px solid #e3e3e3; color: #656d76; font: 12px/19px "Open Sans", sans-serif; }
.path, .count { flex: 1; }
.count { display: flex; align-items: center; justify-content: flex-end; gap: 3px; }
.count svg { width: 8px; height: 8px; }
```
